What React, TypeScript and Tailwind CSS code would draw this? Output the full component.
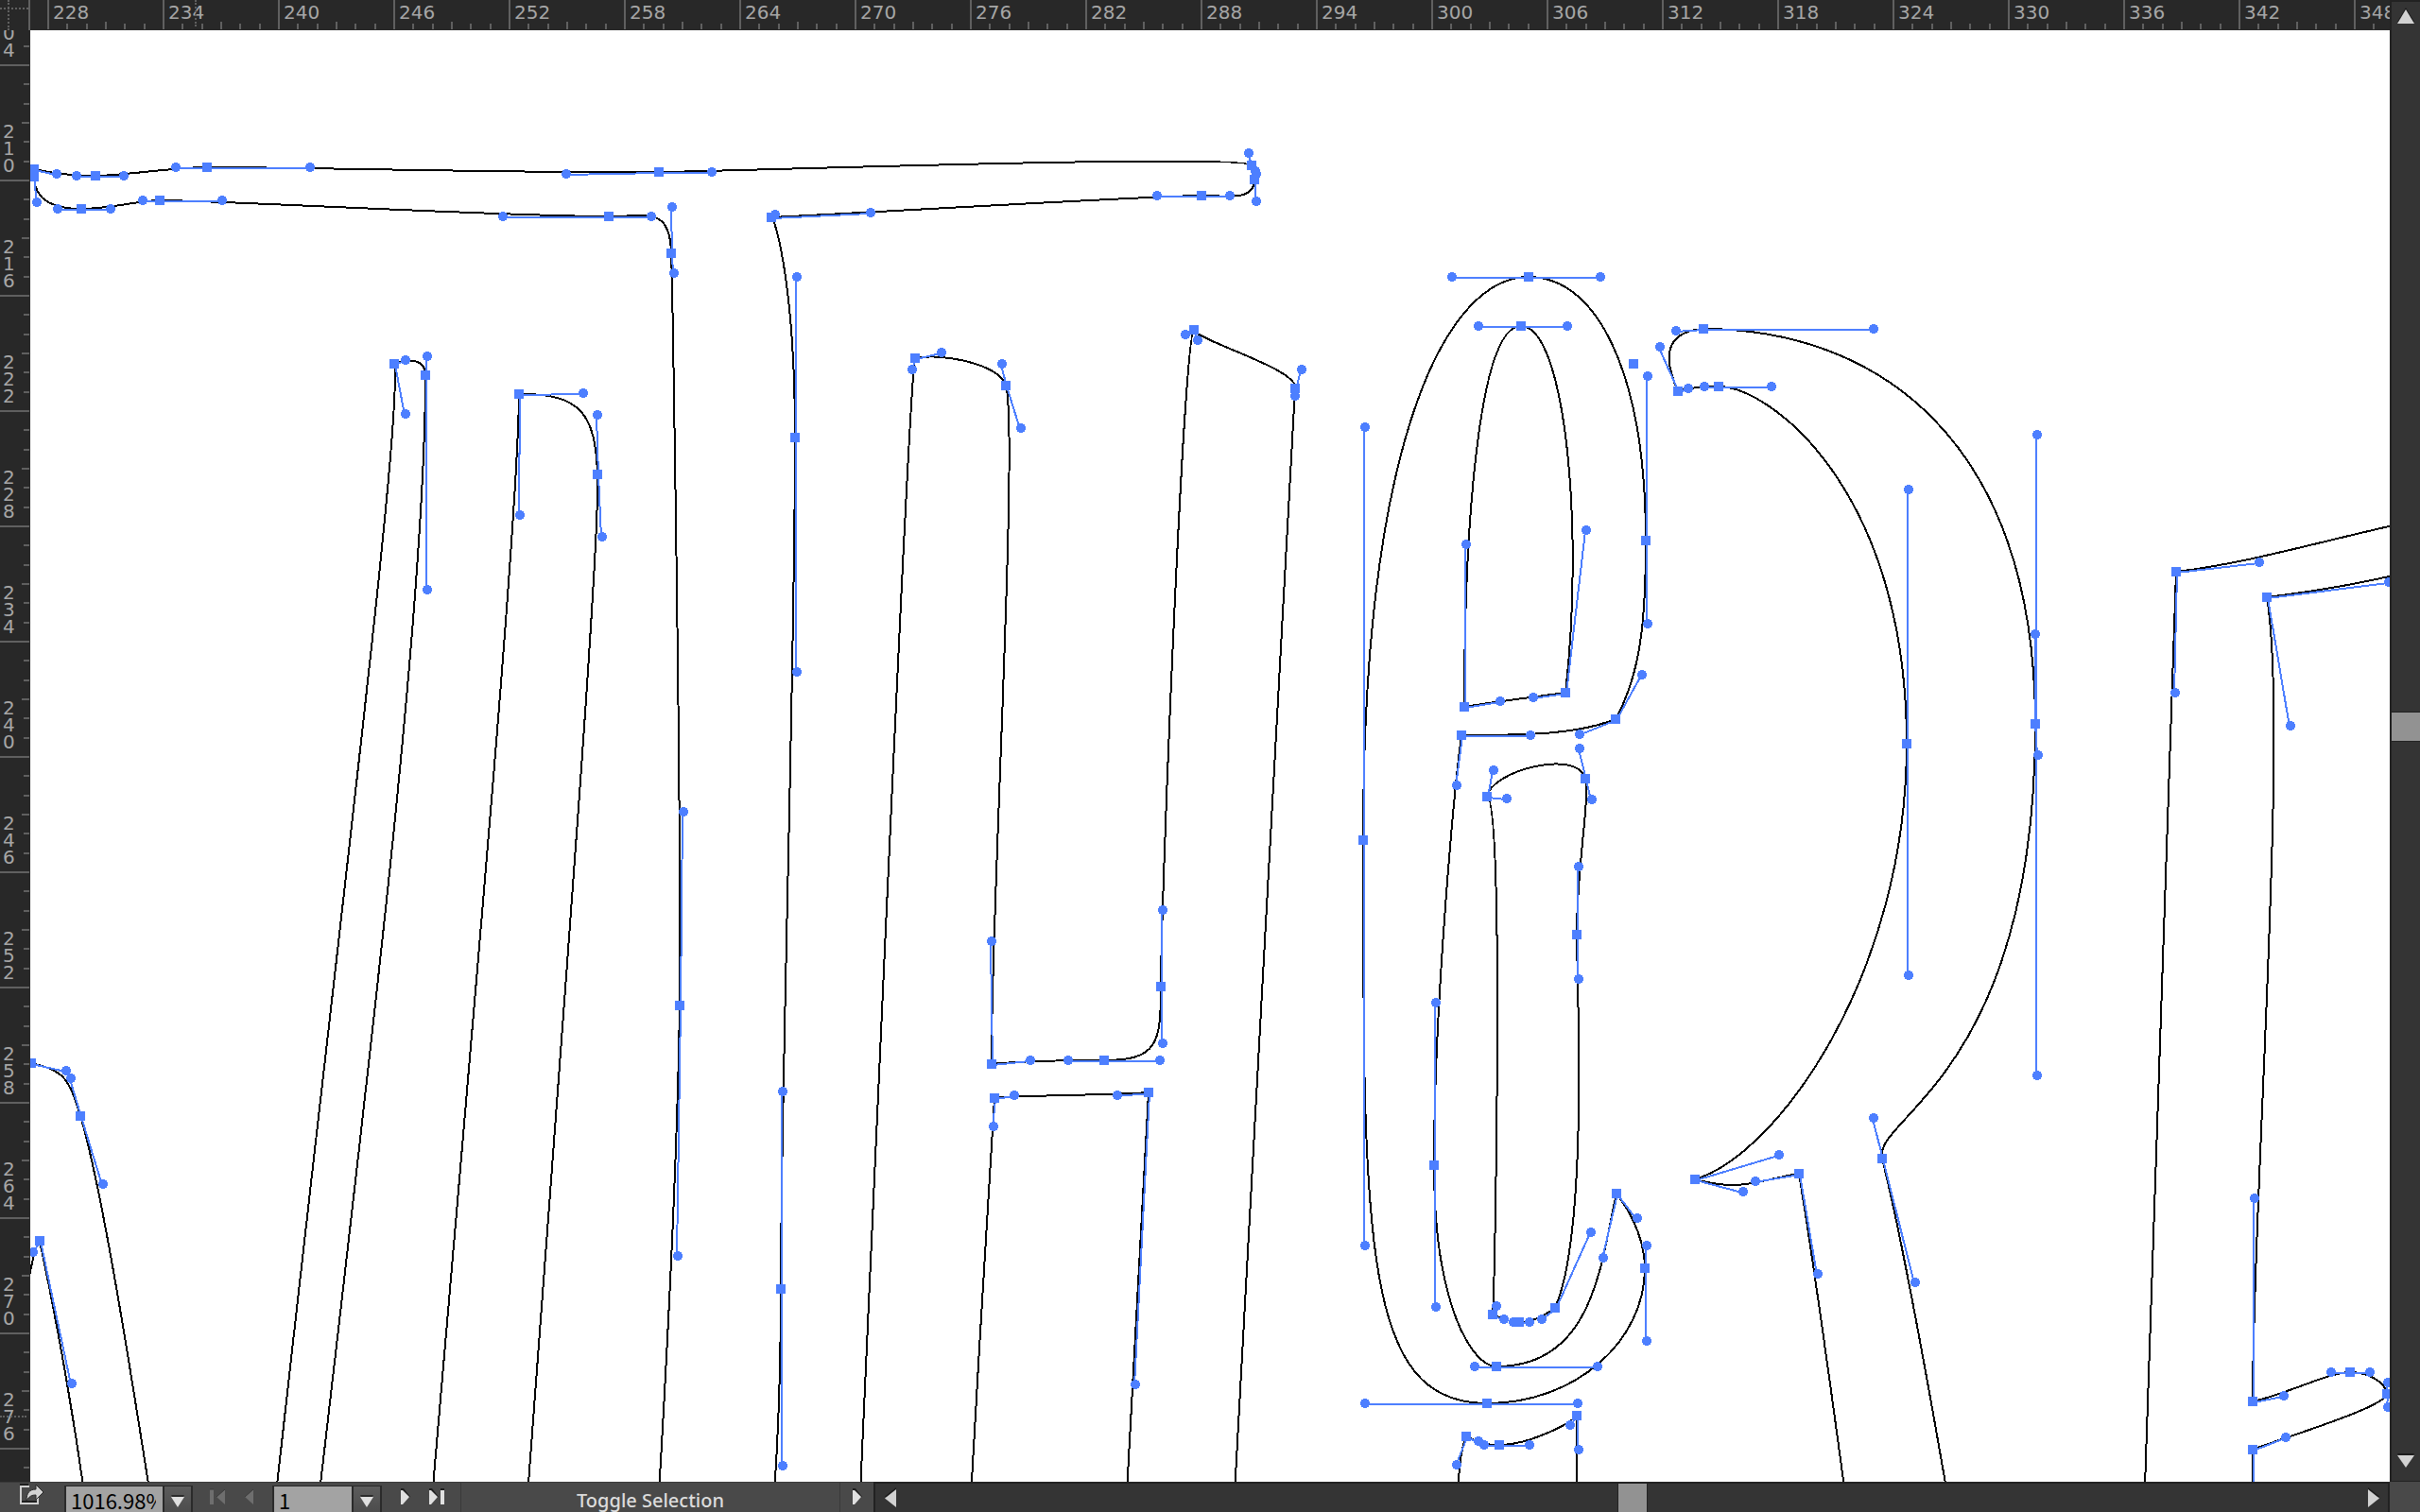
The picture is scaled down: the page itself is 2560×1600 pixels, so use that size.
import React from "react";

type Pt = [number, number];

/** An anchor point of a vector outline with its optional direction handles. */
interface Anchor {
  at: Pt;
  in?: Pt;
  out?: Pt;
  /** Control points whose handles lie outside of the artboard. */
  ctrlIn?: Pt;
  ctrlOut?: Pt;
}

interface Outline {
  anchors: Anchor[];
  closed?: boolean;
}

const a = (at: Pt, hIn?: Pt, hOut?: Pt, ctrlIn?: Pt, ctrlOut?: Pt): Anchor => ({
  at,
  in: hIn,
  out: hOut,
  ctrlIn,
  ctrlOut,
});

const outlines: Outline[] = [
  // W, left strokes
  {
    anchors: [
      a([33, 1125], undefined, [70, 1133]),
      a([85, 1181], [75, 1141], [109, 1253]),
      a([171, 1660], undefined, undefined, [137, 1440]),
    ],
  },
  {
    anchors: [
      a([24, 1394]),
      a([42, 1313], [35, 1325], [76, 1464]),
      a([103, 1680], undefined, undefined, [88, 1570]),
    ],
  },
  // W, right stroke
  {
    anchors: [
      a([280, 1690], undefined, undefined, undefined, [352, 1030]),
      a([417, 385], [429, 438], [429, 381]),
      a([450, 397], [452, 377], [452, 624]),
      a([325, 1690], undefined, undefined, [400, 1050]),
    ],
  },
  {
    anchors: [
      a([448, 1690], undefined, undefined, undefined, [508, 990]),
      a([549, 417], [550, 545], [617, 416]),
      a([632, 502], [632, 439], [637, 568]),
      a([550, 1690], undefined, undefined, [603, 980]),
    ],
  },
  // T
  {
    anchors: [
      a([680, 1850], undefined, undefined, undefined, [690, 1700]),
      a([719, 1064], [717, 1329], [723, 859]),
      a([710, 268], [713, 289], [711, 219]),
      a([644, 229], [689, 229], [532, 229]),
      a([169, 212], [235, 212], [151, 212]),
      a([86, 221], [117, 221], [61, 221]),
      a([36, 187], [39, 214]),
      a([36, 179], undefined, [60, 184]),
      a([101, 186], [81, 186], [131, 186]),
      a([219, 177], [186, 177], [328, 177]),
      a([697, 182], [599, 184], [753, 182]),
      a([1324, 175], [1321, 162], [1328, 181]),
      a([1327, 190], [1329, 184], [1329, 213]),
      a([1271, 207], [1301, 207], [1224, 207]),
      a([816, 230], [921, 225], [820, 227]),
      a([841, 463], [843, 293], [843, 711]),
      a([826, 1364], [828, 1155], [828, 1551]),
      a([793, 1850], undefined, undefined, [814, 1650]),
    ],
  },
  // H
  {
    anchors: [
      a([905, 1690], undefined, undefined, undefined, [938, 960]),
      a([968, 379], [965, 391], [996, 373]),
      a([1064, 408], [1060, 385], [1080, 453]),
      a([1049, 1126], [1049, 996], [1090, 1122]),
      a([1168, 1122], [1130, 1122], [1227, 1122]),
      a([1228, 1044], [1230, 1104], [1230, 963]),
      a([1263, 349], [1254, 354], [1267, 360]),
      a([1370, 411], [1377, 391], [1370, 419]),
      a([1300, 1690], undefined, undefined, [1342, 960]),
    ],
  },
  {
    anchors: [
      a([1021, 1690]),
      a([1052, 1162], [1051, 1192], [1073, 1159]),
      a([1215, 1156], [1182, 1159], [1201, 1465]),
      a([1186, 1690]),
    ],
  },
  // B, outer
  {
    closed: true,
    anchors: [
      a([1617, 293], [1536, 293], [1693, 293]),
      a([1741, 572], [1743, 398], [1743, 660]),
      a([1709, 761], [1737, 714], [1671, 777]),
      a([1546, 778], [1619, 778], [1541, 831]),
      a([1517, 1233], [1519, 1061], [1519, 1383]),
      a([1583, 1446], [1560, 1446], [1690, 1446]),
      a([1710, 1263], [1696, 1331], [1732, 1289]),
      a([1740, 1342], [1742, 1318], [1742, 1419]),
      a([1573, 1485], [1669, 1485], [1444, 1485]),
      a([1442, 889], [1444, 1318], [1444, 452]),
    ],
  },
  // B, counters
  {
    closed: true,
    anchors: [
      a([1609, 345], [1564, 345], [1658, 345]),
      a([1656, 733], [1678, 561], [1622, 738]),
      a([1549, 748], [1587, 742], [1551, 576]),
    ],
  },
  {
    closed: true,
    anchors: [
      a([1573, 843], [1594, 845], [1580, 815]),
      a([1677, 824], [1671, 792], [1684, 846]),
      a([1668, 989], [1670, 917], [1670, 1036]),
      a([1645, 1384], [1683, 1304], [1631, 1396]),
      a([1607, 1399], [1618, 1399], [1601, 1399]),
      a([1579, 1391], [1591, 1396], [1583, 1382]),
    ],
  },
  // Fragment under the B
  {
    anchors: [
      a([1544, 1600]),
      a([1551, 1520], [1541, 1550], [1564, 1525]),
      a([1586, 1529], [1570, 1529], [1618, 1529]),
      a([1668, 1498], [1661, 1508], [1670, 1534]),
      a([1668, 1600]),
    ],
  },
  // R
  {
    anchors: [
      a([1968, 1700]),
      a([1903, 1242], [1923, 1348], [1857, 1250]),
      a([1793, 1248], [1844, 1261], [1882, 1222]),
      a([2017, 787], [2019, 1032], [2019, 518]),
      a([1818, 409], [1874, 409], [1803, 409]),
      a([1775, 414], [1786, 411], [1756, 367]),
      a([1802, 348], [1773, 350], [1982, 348]),
      a([2153, 766], [2155, 460], [2155, 1138]),
      a([1991, 1226], [1982, 1183], [2026, 1357]),
      a([2080, 1700]),
    ],
  },
  // Letter at the right edge
  {
    anchors: [
      a([2265, 1690], undefined, undefined, undefined, [2283, 1150]),
      a([2302, 605], [2301, 733], [2390, 595]),
      a([2600, 541], undefined, undefined, [2480, 565]),
    ],
  },
  {
    anchors: [
      a([2600, 590], undefined, undefined, undefined, [2570, 598]),
      a([2398, 632], [2527, 616], [2423, 768]),
      a([2383, 1483], [2385, 1268], [2416, 1477]),
      a([2486, 1452], [2466, 1452], [2507, 1452]),
      a([2525, 1475], [2526, 1463], [2526, 1489]),
      a([2383, 1534], [2418, 1521], [2385, 1640]),
      a([2383, 1700]),
    ],
  },
];

function outlinePath({ anchors, closed }: Outline): string {
  const outOf = (p: Anchor): Pt =>
    p.ctrlOut ?? (p.out ? [p.out[0] - 2, p.out[1]] : p.at);
  const into = (p: Anchor): Pt =>
    p.ctrlIn ?? (p.in ? [p.in[0] - 2, p.in[1]] : p.at);
  const list = closed ? [...anchors, anchors[0]] : anchors;
  return list
    .map((p, i) =>
      i === 0
        ? `M${p.at}`
        : `C${outOf(list[i - 1])} ${into(p)} ${p.at}`
    )
    .join(" ");
}

function Artwork() {
  const anchors = outlines.flatMap((o) => o.anchors);
  return (
    <svg
      role="img"
      aria-label="Lettering outlines with anchor points"
      className="block shrink-0"
      width={2496}
      height={1536}
      viewBox="32 32 2496 1536"
      shapeRendering="crispEdges"
    >
      <g fill="none" stroke="#000" strokeWidth={2}>
        {outlines.map((o, i) => (
          <path key={i} d={outlinePath(o)} />
        ))}
      </g>
      <g stroke="#4d7fff" strokeWidth={2}>
        {anchors.flatMap((p, i) =>
          [p.in, p.out].map((h, j) =>
            h ? (
              <line
                key={`${i}-${j}`}
                x1={p.at[0] + 1}
                y1={p.at[1] + 1}
                x2={h[0] - 1}
                y2={h[1] + 1}
              />
            ) : null
          )
        )}
        <line x1={2153} y1={671} x2={2153} y2={766} />
        <line x1={2153} y1={766} x2={2155} y2={799} />
      </g>
      <g fill="#4d7fff">
        {anchors.flatMap((p, i) =>
          [p.in, p.out].map((h, j) =>
            h ? <circle key={`${i}-${j}`} cx={h[0]} cy={h[1]} r={5} /> : null
          )
        )}
        <circle cx={2153} cy={671} r={5} />
        <circle cx={2156} cy={799} r={5} />
        {anchors.map((p, i) => (
          <rect key={i} x={p.at[0] - 5} y={p.at[1] - 5} width={10} height={10} />
        ))}
        <rect x={1723} y={380} width={10} height={10} />
      </g>
    </svg>
  );
}

const topLabels = Array.from({ length: 21 }, (_, i) => 228 + i * 6);
const sideLabels = Array.from({ length: 14 }, (_, i) => 204 + i * 6);
const minorTicks = [0, 1, 2, 3, 4];

function TopRuler() {
  return (
    <div className="relative flex h-8 min-w-0 flex-1 overflow-hidden bg-[#282828] pl-[18px]">
      {topLabels.map((n) => (
        <div
          key={n}
          className="flex h-[31px] w-[122px] shrink-0 flex-col border-l-2 border-[#606060]"
        >
          <span className="h-[23px] pt-px pl-1 text-[20px] leading-6">{n}</span>
          <div className="flex h-2 items-end justify-evenly">
            {minorTicks.map((t) => (
              <i
                key={t}
                className={t === 2 ? "h-2 w-0.5 bg-[#606060]" : "h-1.5 w-0.5 bg-[#606060]"}
              />
            ))}
          </div>
        </div>
      ))}
      <i className="absolute top-0 left-[174px] h-7 border-l-2 border-dotted border-[#606060]" />
    </div>
  );
}

function SideRuler() {
  return (
    <div className="relative flex w-8 shrink-0 flex-col overflow-hidden bg-[#282828]">
      {sideLabels.map((n, i) => (
        <div
          key={n}
          className={
            i === 0
              ? "flex h-[38px] w-[31px] shrink-0 items-end justify-between overflow-hidden border-b-2 border-[#606060] pl-[3px]"
              : "flex h-[122px] w-[31px] shrink-0 items-end justify-between border-b-2 border-[#606060] pl-[3px]"
          }
        >
          {/* Narrower than two digits, so that the number runs downwards */}
          <span className="mb-1.5 w-3 text-[20px] leading-[18px] break-all">{n}</span>
          <div className="flex h-[120px] shrink-0 flex-col items-end justify-evenly">
            {minorTicks.map((t) => (
              <i
                key={t}
                className={t === 2 ? "h-0.5 w-2 bg-[#606060]" : "h-0.5 w-1.5 bg-[#606060]"}
              />
            ))}
          </div>
        </div>
      ))}
      <i className="absolute bottom-[68px] left-0 w-7 border-t-2 border-dotted border-[#606060]" />
    </div>
  );
}

function Triangle({ d, w, h }: { d: string; w: number; h: number }) {
  return (
    <svg width={w} height={h} viewBox={`0 0 ${w} ${h}`} aria-hidden="true">
      <path d={d} fill="#1c1c1c" transform="translate(0 -2)" />
      <path d={d} fill="#d2d2d2" />
    </svg>
  );
}

const UP = "M10 3 L19 18 H1 Z";
const DOWN = "M1 3 H19 L10 16 Z";
const LEFT = "M14 3 V22 L2 12.5 Z";
const RIGHT = "M2 3 V22 L14 12.5 Z";

function VerticalScrollbar() {
  return (
    <div className="flex w-8 shrink-0 flex-col border-l-2 border-[#222] bg-[#343434]">
      <button aria-label="Scroll up" className="flex h-8 items-center justify-center border-t-2 border-[#222]">
        <Triangle d={UP} w={20} h={20} />
      </button>
      <div className="grow-[720] basis-0" />
      <div className="h-8 border-y border-[#222] bg-[#929292]" />
      <div className="grow-[750] basis-0" />
      <button aria-label="Scroll down" className="flex h-8 items-start justify-center border-b border-[#222] pt-px">
        <Triangle d={DOWN} w={20} h={18} />
      </button>
    </div>
  );
}

function HorizontalScrollbar() {
  return (
    <div className="flex min-w-0 flex-1 border-t-2 border-l-2 border-[#222] bg-[#343434]">
      <button aria-label="Scroll left" className="flex w-8 items-center justify-center">
        <Triangle d={LEFT} w={16} h={24} />
      </button>
      <div className="grow-[752] basis-0" />
      <div className="w-8 border-x border-[#222] bg-[#929292]" />
      <div className="grow-[752] basis-0" />
      <button aria-label="Scroll right" className="flex w-8 items-center justify-center border-r-2 border-[#222]">
        <Triangle d={RIGHT} w={16} h={24} />
      </button>
    </div>
  );
}

function ComboBox({
  id,
  label,
  value,
  inputClass,
}: {
  id: string;
  label: string;
  value: string;
  inputClass: string;
}) {
  return (
    <div className="mt-[3px] flex h-[29px] shrink-0 gap-0.5 bg-[#2a2a2a] px-0.5 pt-px">
      <label htmlFor={id} className="sr-only">
        {label}
      </label>
      <div className={inputClass}>
        <input
          id={id}
          type="text"
          defaultValue={value}
          className="block h-7 w-full bg-transparent font-['Noto_Sans_CJK_JP',sans-serif] text-[22px] leading-7 text-black outline-none"
        />
      </div>
      <button
        aria-label={`${label} options`}
        className="flex w-7 items-center justify-center bg-gradient-to-b from-[#5c5c5c] to-[#4c4c4c] pt-1"
      >
        <svg width="16" height="14" viewBox="0 0 16 14" aria-hidden="true">
          <path d="M1 0 H15 L8 11 Z" fill="#2a2a2a" />
          <path d="M1 2 H15 L8 13 Z" fill="#e0e0e0" />
        </svg>
      </button>
    </div>
  );
}

function ShareIcon() {
  return (
    <svg width="28" height="24" viewBox="0 0 28 24" aria-hidden="true">
      <path d="M10 3 H2 V21 H20 V16" fill="none" stroke="#1e1e1e" strokeWidth="2" transform="translate(0 -2)" />
      <path d="M11 3 H2 V21 H20 V15" fill="none" stroke="#cfcfcf" strokeWidth="2" />
      <path
        d="M8 18 C8 10 11 6 18 6 V1 L26 9 L18 17 V12 C14 12 11 13 8 18 Z"
        fill="#d2d2d2"
        stroke="#2a2a2a"
        strokeWidth="1"
      />
    </svg>
  );
}

function StatusBar() {
  return (
    <footer className="flex h-8 shrink-0 overflow-hidden bg-[#494949]">
      <div className="flex w-[924px] shrink-0 border-t border-[#3a3a3a]">
        <button aria-label="Share" className="flex w-[68px] shrink-0 items-center justify-center pb-1.5">
          <ShareIcon />
        </button>
        <ComboBox
          id="zoom"
          label="Zoom level"
          value="1016.98%"
          inputClass="w-[102px] overflow-hidden bg-[#a3a3a3] pr-[7px] pl-[5px]"
        />
        <button aria-label="First artboard" disabled className="ml-[17px] flex w-5 items-center pb-0.5">
          <svg width="18" height="18" viewBox="0 0 18 18" aria-hidden="true">
            <path d="M1 1 H5 V17 H1 Z M17 1 V17 L8 9 Z" fill="#6e6e6e" />
            <path d="M1 1 H5 M8 9 L17 1" stroke="#3a3a3a" fill="none" />
          </svg>
        </button>
        <button aria-label="Previous artboard" disabled className="ml-[17px] flex w-3 items-center pb-0.5">
          <svg width="12" height="18" viewBox="0 0 12 18" aria-hidden="true">
            <path d="M10 1 V17 L1 9 Z" fill="#6e6e6e" />
            <path d="M1 9 L10 1" stroke="#3a3a3a" fill="none" />
          </svg>
        </button>
        <div className="ml-[18px] flex">
          <ComboBox
            id="artboard"
            label="Artboard"
            value="1"
            inputClass="w-[82px] overflow-hidden bg-[#a3a3a3] pl-[5px]"
          />
        </div>
        <button aria-label="Next artboard" className="ml-[19px] flex w-3 items-center pb-0.5">
          <svg width="12" height="18" viewBox="0 0 12 18" aria-hidden="true">
            <path d="M1 0 L4 0 L11 9 L1 10 Z" fill="#1e1e1e" />
            <path d="M1 2 H3 L10 9 L3 17 H1 Z" fill="#e0e0e0" />
          </svg>
        </button>
        <button aria-label="Last artboard" className="ml-[18px] flex w-5 items-center pb-0.5">
          <svg width="20" height="18" viewBox="0 0 20 18" aria-hidden="true">
            <path d="M1 0 L4 0 L11 9 L1 10 Z M13 0 H17 V3 H13 Z" fill="#1e1e1e" />
            <path d="M1 2 H3 L10 9 L3 17 H1 Z M13 2 H17 V17 H13 Z" fill="#e0e0e0" />
          </svg>
        </button>
        <div className="ml-[14px] flex flex-1 items-center justify-center border-x border-[#3a3a3a] pt-1.5 font-['Noto_Sans',sans-serif] text-[20px] leading-6 font-medium text-[#dcdcdc]">
          Toggle Selection
        </div>
        <button aria-label="Status bar menu" className="flex w-[35px] items-center pb-0.5 pl-3">
          <svg width="12" height="18" viewBox="0 0 12 18" aria-hidden="true">
            <path d="M1 0 L4 0 L11 9 L1 10 Z" fill="#1e1e1e" />
            <path d="M1 2 H3 L10 9 L3 17 H1 Z" fill="#e0e0e0" />
          </svg>
        </button>
      </div>
      <HorizontalScrollbar />
      <div className="w-8 shrink-0" />
    </footer>
  );
}

export default function App() {
  return (
    <div className="flex h-screen flex-col overflow-hidden bg-[#282828] font-['DejaVu_Sans',sans-serif] text-[#a6a6a6]">
      <div className="flex min-h-0 flex-1">
        <div className="flex min-w-0 flex-1 flex-col">
          <div className="flex shrink-0">
            <div className="relative h-8 w-8 shrink-0 border-r-2 border-[#606060] bg-[#282828]">
              <i className="absolute top-2 left-0 w-full border-t-2 border-dotted border-[#606060]" />
              <i className="absolute top-0 left-2 h-full border-l-2 border-dotted border-[#606060]" />
            </div>
            <TopRuler />
          </div>
          <div className="flex min-h-0 flex-1">
            <SideRuler />
            <main className="min-w-0 flex-1 overflow-hidden bg-white">
              <Artwork />
            </main>
          </div>
        </div>
        <VerticalScrollbar />
      </div>
      <StatusBar />
    </div>
  );
}
